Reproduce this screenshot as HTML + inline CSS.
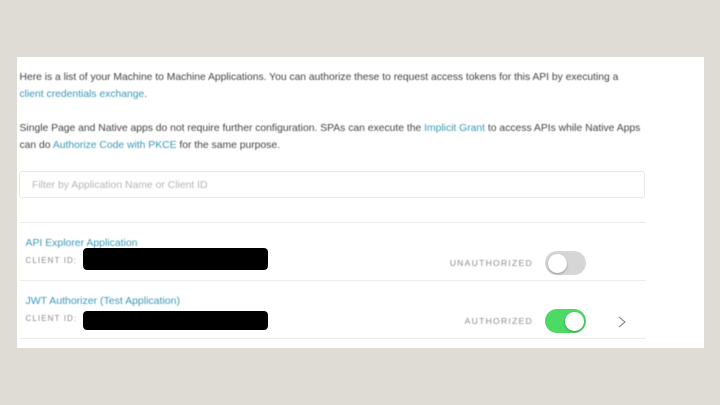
<!DOCTYPE html>
<html><head><meta charset="utf-8">
<style>
html,body{margin:0;padding:0}
body{width:720px;height:405px;background:#dfdcd6;position:relative;overflow:hidden;font-family:"Liberation Sans",sans-serif;}
#p{position:absolute;left:17px;top:57px;width:687px;height:291px;background:#fff}
.t{position:absolute;white-space:nowrap;font-size:10.35px;line-height:14px;color:#434345;filter:blur(.4px)}
a{color:#3a98b8;text-decoration:none}
.l{position:absolute;left:20px;width:626px;height:1px;background:#ececec}
.red{position:absolute;left:83px;width:185px;background:#000;border-radius:4px}
.cid{position:absolute;left:25.5px;font-size:8px;letter-spacing:1.1px;color:#8a8a8a;white-space:nowrap;line-height:10px;filter:blur(.4px)}
.st{position:absolute;font-size:8.6px;letter-spacing:1.25px;color:#8a8a8a;white-space:nowrap;line-height:10px;text-align:right;right:187px;filter:blur(.4px)}
.sw{position:absolute;left:545px;width:41px;height:24px;border-radius:12px}
.k{position:absolute;top:2.5px;width:19px;height:19px;border-radius:50%;background:#fff;box-shadow:0 1px 2px rgba(0,0,0,.3)}
</style></head><body>
<div id="p"></div>
<div class="t" style="left:19.5px;top:71px;letter-spacing:-.015px">Here is a list of your Machine to Machine Applications. You can authorize these to request access tokens for this API by executing a</div>
<div class="t" style="left:19.5px;top:88px"><a>client credentials exchange</a>.</div>
<div class="t" style="left:19.5px;top:122px">Single Page and Native apps do not require further configuration. SPAs can execute the <a>Implicit Grant</a> to access APIs while Native Apps</div>
<div class="t" style="left:19.5px;top:139px">can do <a>Authorize Code with PKCE</a> for the same purpose.</div>
<div style="position:absolute;left:19px;top:170.5px;width:624px;height:25px;border:1.5px solid #e8e8e8;border-radius:3px;background:#fff"></div>
<div class="t" style="left:32px;top:179px;color:#b5b5b5;font-size:10.4px">Filter by Application Name or Client ID</div>
<div class="l" style="top:221.5px"></div>
<div class="t" style="left:25.5px;top:237px;font-size:10.45px"><a>API Explorer Application</a></div>
<div class="cid" style="top:255.5px">CLIENT ID:</div>
<div class="red" style="top:248px;height:22px"></div>
<div class="st" style="top:258px">UNAUTHORIZED</div>
<div class="sw" style="top:251px;background:#d6d6d6"><div class="k" style="left:3px"></div></div>
<div class="l" style="top:280px"></div>
<div class="t" style="left:25.5px;top:294px;font-size:10.5px"><a>JWT Authorizer (Test Application)</a></div>
<div class="cid" style="top:313.5px">CLIENT ID:</div>
<div class="red" style="top:311px;height:19px"></div>
<div class="st" style="top:316px">AUTHORIZED</div>
<div class="sw" style="top:309px;background:#4cd964"><div class="k" style="left:20px"></div></div>
<svg style="position:absolute;left:616px;top:315px" width="12" height="14" viewBox="0 0 12 14"><path d="M3 2 L9 7 L3 12" fill="none" stroke="#777" stroke-width="1"/></svg>
<div class="l" style="top:338px"></div>
</body></html>
